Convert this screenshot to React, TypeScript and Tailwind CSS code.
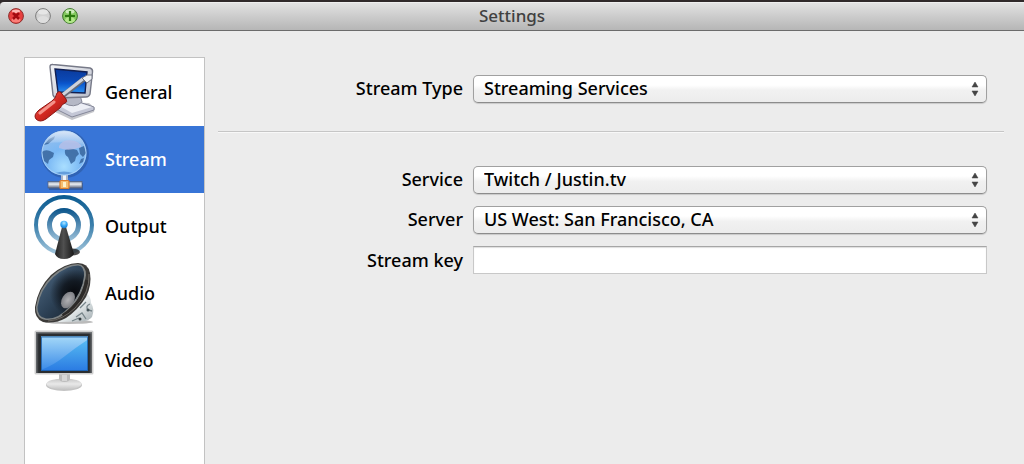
import { useState, type ReactNode } from "react";

function IconFrame({ children }: { children: ReactNode }) {
  return (
    <svg className="h-full w-16 shrink-0" viewBox="0 0 64 67" aria-hidden="true">
      {children}
    </svg>
  );
}

function GeneralIcon() {
  return (
    <IconFrame>
      <defs>
        <linearGradient id="g-case" x1="0" y1="0" x2="1" y2="1">
          <stop offset="0" stopColor="#f4f5f8" />
          <stop offset="1" stopColor="#b9bdca" />
        </linearGradient>
        <linearGradient id="g-screen" x1="0" y1="0" x2="0" y2="1">
          <stop offset="0" stopColor="#0a3a9c" />
          <stop offset="0.45" stopColor="#0b48b4" />
          <stop offset="0.6" stopColor="#0a55cc" />
          <stop offset="1" stopColor="#2d93f2" />
        </linearGradient>
        <linearGradient id="g-red" x1="0" y1="0" x2="1" y2="1">
          <stop offset="0" stopColor="#f26a60" />
          <stop offset="0.5" stopColor="#d42a22" />
          <stop offset="1" stopColor="#94110e" />
        </linearGradient>
      </defs>
      <path d="M24 48 L30 43 L56 44 L62 49 L61 53 L39 61 L22 53z" fill="#8b8d98" opacity=".5" />
      <path d="M23 46 L43 42 L61 48 L61 51 L39 58 L23 50z" fill="#c4c7d6" stroke="#85889a" />
      <path d="M25 46 L43 43 L59 48 L39 54z" fill="#eceef5" />
      <path d="M34 37 L47 36 L49 43 Q41 50 31 44z" fill="#b5b8c6" stroke="#888b9b" />
      <path d="M17 8 Q17 5 20 5.500 L57 9 Q60 10 59.500 13 L57 35 Q56 38 53 38 L24 39 Q21 39 20 36z" fill="url(#g-case)" stroke="#777a88" strokeWidth="1.4" />
      <path d="M22 10 L54 13 L52 34 L25 33z" fill="url(#g-screen)" stroke="#101f52" strokeWidth="1.4" />
      <path d="M28 38 L51 20" stroke="#666b78" strokeWidth="5" />
      <path d="M28 37 L51 19" stroke="#cfd3dc" strokeWidth="3" />
      <path d="M49 19 L54 16 L59 16 L59 20 L54 24z" fill="#eef0f4" stroke="#737785" />
      <path d="M24 34 Q27 31 29 35 L33 40 Q35 43 32 44 Q29 45 27 49 L13 60 Q7 64 3 60 Q0 56 6 51 L19 42 Q23 39 24 34z" fill="url(#g-red)" stroke="#8b1714" />
      <path d="M7 54 L21 43" stroke="#ffb3aa" strokeWidth="3" strokeLinecap="round" opacity=".75" />
    </IconFrame>
  );
}

function StreamIcon() {
  return (
    <IconFrame>
      <defs>
        <radialGradient id="s-globe" cx=".5" cy=".8" r=".85">
          <stop offset="0" stopColor="#a9deff" />
          <stop offset=".45" stopColor="#7ab8f4" />
          <stop offset="1" stopColor="#9bbfea" />
        </radialGradient>
        <linearGradient id="s-shine" x1="0" y1="0" x2="0" y2="1">
          <stop offset="0" stopColor="#dce8f8" stopOpacity=".95" />
          <stop offset="1" stopColor="#d6e5f8" stopOpacity=".15" />
        </linearGradient>
        <linearGradient id="s-pipe" x1="0" y1="0" x2="0" y2="1">
          <stop offset="0" stopColor="#8190a8" />
          <stop offset=".4" stopColor="#eef1f5" />
          <stop offset="1" stopColor="#5d6880" />
        </linearGradient>
      </defs>
      <circle cx="32" cy="28" r="24" fill="#2b569e" opacity=".6" />
      <rect x="28" y="48" width="7" height="9" fill="#a9b5c8" />
      <rect x="30" y="48" width="3" height="9" fill="#f1f4f8" />
      <rect x="16" y="57" width="34" height="7" fill="#294d8c" opacity=".6" />
      <rect x="15" y="55.500" width="34" height="6.500" fill="url(#s-pipe)" stroke="#56627c" strokeWidth=".7" />
      <rect x="27" y="54.500" width="9" height="8" rx="1" fill="#f6bd70" stroke="#dd7d2b" strokeWidth="1.2" />
      <path d="M31.500 56v5" stroke="#fff0ca" strokeWidth="3" />
      <circle cx="31" cy="27" r="22.500" fill="url(#s-globe)" />
      <path d="M9 26 Q12 23 17 25 L21 27 L20 31 L16 34 L15 38 L11 35z M32 24 Q36 21 44 24 L46 28 L43 31 L42 35 L38 38 L35 31 Q31 29 32 24z M46 22 L51 20 L53 27 L50 31 L47 28z M48 33 L51 32 L50 36 L46 38z M11 19 L16 13 L22 10 L21 13 L15 18z" fill="#3c6aa2" opacity=".9" />
      <path d="M12 17 Q17 5 31 5 Q45 5 50 18 Q38 15 12 17z" fill="url(#s-shine)" />
      <path d="M26 20 Q30 12 42 15 Q49 18 48 21 Q36 26 26 22z" fill="#b9bfe6" opacity=".8" />
      <path d="M22 47 Q31 44 40 47 Q31 51 22 47z" fill="#4f89ce" opacity=".7" />
      <circle cx="31" cy="27" r="22" fill="none" stroke="#c0ddfa" strokeOpacity=".6" />
    </IconFrame>
  );
}

function OutputIcon() {
  return (
    <IconFrame>
      <defs>
        <linearGradient id="o-ring" x1="0" y1="3" x2="0" y2="62" gradientUnits="userSpaceOnUse">
          <stop offset="0" stopColor="#0d5c91" />
          <stop offset=".5" stopColor="#3c80ac" />
          <stop offset="1" stopColor="#a8c9de" />
        </linearGradient>
        <linearGradient id="o-inner" x1="0" y1="15" x2="0" y2="49" gradientUnits="userSpaceOnUse">
          <stop offset="0" stopColor="#075289" />
          <stop offset="1" stopColor="#a0c4dc" />
        </linearGradient>
        <linearGradient id="o-cone" x1="0" y1="0" x2="1" y2="0">
          <stop offset="0" stopColor="#222" />
          <stop offset=".45" stopColor="#505050" />
          <stop offset="1" stopColor="#181818" />
        </linearGradient>
        <radialGradient id="o-dot" cx=".5" cy=".3" r=".7">
          <stop offset="0" stopColor="#b9e7ff" />
          <stop offset=".55" stopColor="#36a9f8" />
          <stop offset="1" stopColor="#1578cd" />
        </radialGradient>
      </defs>
      <circle cx="31" cy="32" r="28" fill="none" stroke="url(#o-ring)" strokeWidth="4" />
      <circle cx="31" cy="32" r="14.500" fill="none" stroke="url(#o-inner)" strokeWidth="5" />
      <ellipse cx="39" cy="59" rx="8" ry="3.500" fill="#222" opacity=".8" />
      <path d="M29 34 L33 34 L41 61 Q38 66 31 66 Q24 66 22 61z" fill="url(#o-cone)" />
      <circle cx="31" cy="31.500" r="3.700" fill="url(#o-dot)" />
    </IconFrame>
  );
}

function AudioIcon() {
  return (
    <IconFrame>
      <defs>
        <linearGradient id="a-cone" x1="0" y1="0" x2="1" y2="1">
          <stop offset="0" stopColor="#526c86" />
          <stop offset=".5" stopColor="#2e4358" />
          <stop offset="1" stopColor="#121b25" />
        </linearGradient>
        <radialGradient id="a-depth" cx="41" cy="33" r="24" gradientUnits="userSpaceOnUse">
          <stop offset="0" stopColor="#080a0e" />
          <stop offset=".5" stopColor="#0a0d12" stopOpacity=".75" />
          <stop offset="1" stopColor="#0a0d12" stopOpacity="0" />
        </radialGradient>
        <radialGradient id="a-cap" cx=".5" cy=".5" r=".6">
          <stop offset="0" stopColor="#b1b1b4" />
          <stop offset="1" stopColor="#74767c" />
        </radialGradient>
        <linearGradient id="a-metal" x1="0" y1="0" x2="1" y2="1">
          <stop offset="0" stopColor="#8b9499" />
          <stop offset=".5" stopColor="#e9eeef" />
          <stop offset="1" stopColor="#a3adb1" />
        </linearGradient>
      </defs>
      <ellipse cx="36" cy="62" rx="24" ry="2" fill="#777" opacity=".5" />
      <path d="M53 33 Q58 36 58 43 Q62 49 59 57 Q56 61 48 61.500 L25 62 L35 51z" fill="url(#a-metal)" />
      <path d="M47 48 L53 42 M57 44 Q52 46 55 50 L59 51 M53 59 L49 53 L43 57 M39 61 L46 58" fill="none" stroke="#77858a" strokeWidth="1.300" />
      <circle cx="47" cy="59" r="1.500" fill="#313b3e" />
      <circle cx="55" cy="50" r="1.500" fill="#445358" />
      <path d="M45 3 Q55 3 57 13 Q59 25 53 37 Q45 50 33 58 Q22 64 10 62 Q1 58 2 47 Q5 28 18 15 Q32 3 45 3z" fill="#3b3a38" />
      <path d="M45 4 Q53 5 53 15 Q51 34 38 48 Q27 61 13 60 Q3 59 3 47 Q6 28 19 16 Q32 4 45 4z" fill="#7e8384" />
      <path d="M45 5.500 Q51.500 6 51 16 Q49 33 36 47 Q25 59.500 13 58.500 Q4 57 4.500 47 Q7.500 29 20.500 17 Q33.500 5.500 45 5.500z" fill="url(#a-cone)" />
      <path d="M45 5.500 Q51.500 6 51 16 Q49 33 36 47 Q25 59.500 13 58.500 Q4 57 4.500 47 Q7.500 29 20.500 17 Q33.500 5.500 45 5.500z" fill="url(#a-depth)" />
      <ellipse cx="35" cy="40" rx="6" ry="9" transform="rotate(32 35 40)" fill="url(#a-cap)" />
      <path d="M54 20 Q51 42 30 56" stroke="#2c2a28" strokeWidth="4" fill="none" />
      <path d="M56 14 Q57 33 42 48 Q30 60 15 61" stroke="#6d6964" strokeWidth="1" fill="none" />
    </IconFrame>
  );
}

function VideoIcon() {
  return (
    <IconFrame>
      <defs>
        <linearGradient id="v-screen" x1="0" y1="0" x2="0" y2="1">
          <stop offset="0" stopColor="#5cc2f4" />
          <stop offset="1" stopColor="#2a7ae2" />
        </linearGradient>
        <linearGradient id="v-shine" x1="0" y1="0" x2="0" y2="1">
          <stop offset="0" stopColor="#a4d8f8" />
          <stop offset="1" stopColor="#3b8be8" />
        </linearGradient>
        <linearGradient id="v-frame" x1="0" y1="0" x2="1" y2="0">
          <stop offset="0" stopColor="#6b6e71" />
          <stop offset=".05" stopColor="#2a2d30" />
          <stop offset=".95" stopColor="#2a2d30" />
          <stop offset="1" stopColor="#6b6e71" />
        </linearGradient>
        <linearGradient id="v-stand" x1="0" y1="0" x2="0" y2="1">
          <stop offset="0" stopColor="#c6c6c6" />
          <stop offset=".5" stopColor="#e9e9e9" />
          <stop offset="1" stopColor="#c4c4c4" />
        </linearGradient>
      </defs>
      <ellipse cx="31" cy="58" rx="18" ry="6" fill="#c4c4c4" />
      <ellipse cx="31" cy="57" rx="17.500" ry="5.500" fill="url(#v-stand)" />
      <path d="M26 47h11v5q-1 3-5.500 3t-5.500-3z" fill="#bcbcbc" />
      <path d="M29 48h5v6h-5z" fill="#d6d6d6" />
      <rect x="1.500" y="3.500" width="59" height="44" rx="1.500" fill="#cfcfcf" />
      <rect x="3" y="5" width="56" height="41" fill="url(#v-frame)" />
      <rect x="3" y="5" width="56" height="1.500" fill="#717477" />
      <rect x="8" y="9.500" width="47" height="34.500" fill="url(#v-screen)" />
      <path d="M8 9.500h47v3Q42 21 32 29Q21 38 8 43z" fill="url(#v-shine)" />
      <rect x="8.500" y="10" width="46" height="33.500" fill="none" stroke="#195ba6" strokeOpacity=".8" />
    </IconFrame>
  );
}

const sections = [
  { name: "General", Icon: GeneralIcon },
  { name: "Stream", Icon: StreamIcon },
  { name: "Output", Icon: OutputIcon },
  { name: "Audio", Icon: AudioIcon },
  { name: "Video", Icon: VideoIcon },
];

const rowClass = "grid grid-cols-[245px_minmax(0,1fr)] gap-x-[10px]";

function SelectRow({ id, label, options }: { id: string; label: string; options: string[] }) {
  return (
    <div className={rowClass}>
      <label htmlFor={id} className="text-right leading-[26px]">{label}</label>
      <div className="relative flex">
        <select
          id={id}
          className="h-7 w-full appearance-none rounded-[5px] border border-[#a0a0a0] border-b-[#8c8c8c] bg-linear-to-b from-white from-35% via-[#f1f1f1] via-55% to-[#ececec] pr-8 pb-0.5 pl-[10px] leading-6 shadow-[0_1px_1px_rgba(0,0,0,0.15)] outline-none"
        >
          {options.map((option) => (
            <option key={option}>{option}</option>
          ))}
        </select>
        <svg className="pointer-events-none absolute top-1.5 right-2 h-4 w-2" viewBox="0 0 8 16" aria-hidden="true">
          <path d="M4 1 7 6H1zM4 15 7 10H1z" fill="#444" stroke="#444" strokeWidth=".5" />
        </svg>
      </div>
    </div>
  );
}

function TitleBar() {
  return (
    <header className="bg-[#30292a] pt-0.5">
      <div className="grid h-[29px] grid-cols-[1fr_auto_1fr] items-center rounded-tl-[4px] border-t border-b border-t-[#eeeeee] border-b-[#6b6b6b] bg-linear-to-b from-[#e2e2e2] to-[#b6b6b6] px-2 pb-px">
        <div className="flex gap-[11px]">
          <button type="button" aria-label="Close" className="size-4">
            <svg viewBox="0 0 16 16">
              <circle cx="8" cy="8" r="7.400" fill="#e8403f" stroke="#8c2f2d" />
              <ellipse cx="8" cy="12" rx="4.500" ry="2.500" fill="#fb7f78" />
              <ellipse cx="8" cy="3.200" rx="4" ry="1.700" fill="#fcb5b0" />
              <path d="m5 5 6 6m0-6-6 6" stroke="#a30b10" strokeWidth="2.500" />
            </svg>
          </button>
          <button type="button" aria-label="Minimize" className="size-4">
            <svg viewBox="0 0 16 16">
              <circle cx="8" cy="8" r="7.400" fill="#d2d2d2" stroke="#7c7c7c" />
              <ellipse cx="8" cy="11.500" rx="5.500" ry="3.500" fill="#dedede" />
              <ellipse cx="8" cy="4" rx="5" ry="2.500" fill="#e6e6e6" />
            </svg>
          </button>
          <button type="button" aria-label="Zoom" className="size-4">
            <svg viewBox="0 0 16 16">
              <circle cx="8" cy="8" r="7.400" fill="#82c85d" stroke="#3f742e" />
              <ellipse cx="8" cy="12" rx="5" ry="3" fill="#b4e88b" />
              <ellipse cx="8" cy="3.500" rx="4.500" ry="2.200" fill="#cdebbb" />
              <path d="M8 3v10M3 8h10" stroke="#2c7a10" strokeWidth="2.200" />
            </svg>
          </button>
        </div>
        <h1 className="text-[17px] leading-6 font-medium text-[#404040]">Settings</h1>
      </div>
    </header>
  );
}

export default function App() {
  const [active, setActive] = useState("Stream");

  return (
    <div className="flex min-h-screen flex-col bg-[#ececec] font-['Noto_Sans','Open_Sans',sans-serif] text-[18px] font-medium text-black">
      <TitleBar />
      <div className="flex flex-1 pt-[26px] pr-5 pl-6">
        <nav aria-label="Settings sections" className="w-[181px] shrink-0 border border-b-0 border-[#c2c2c2] bg-white pt-px">
          {sections.map(({ name, Icon }) => (
            <button
              key={name}
              type="button"
              aria-current={active === name ? "page" : undefined}
              onClick={() => setActive(name)}
              className={
                active === name
                  ? "flex h-[67px] w-full items-center gap-2 bg-[#3875d7] pl-2 text-white"
                  : "flex h-[67px] w-full items-center gap-2 pl-2"
              }
            >
              <Icon />
              <span>{name}</span>
            </button>
          ))}
        </nav>
        <main className="ml-[13px] min-w-0 flex-1 pt-[18px]">
          <form onSubmit={(event) => event.preventDefault()}>
            <div className="pr-[17px]">
              <SelectRow id="stream-type" label="Stream Type" options={["Streaming Services", "Custom Streaming Server"]} />
            </div>
            <hr className="mt-7 mb-[33px] border-t border-b border-t-[#c6c6c6] border-b-[#f8f8f8]" />
            <div className="flex flex-col gap-3 pr-[17px]">
              <SelectRow id="service" label="Service" options={["Twitch / Justin.tv"]} />
              <SelectRow id="server" label="Server" options={["US West: San Francisco, CA"]} />
              <div className={rowClass}>
                <label htmlFor="stream-key" className="text-right leading-7">Stream key</label>
                <input
                  id="stream-key"
                  type="text"
                  className="h-7 w-full border border-[#c8c8c8] border-t-[#a6a6a6] bg-white px-2 shadow-[inset_0_1px_1px_#dedede] outline-none"
                />
              </div>
            </div>
          </form>
        </main>
      </div>
    </div>
  );
}
